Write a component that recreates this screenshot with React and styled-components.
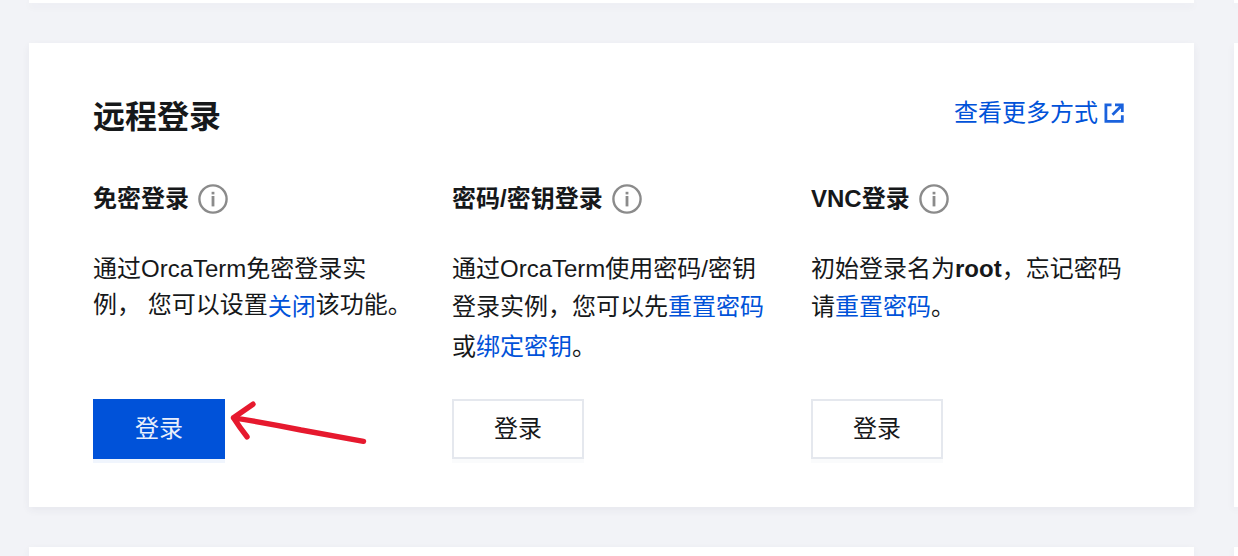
import React from 'react';
import styled, { createGlobalStyle } from 'styled-components';

const GlobalStyle = createGlobalStyle`
  * { box-sizing: border-box; }
  body {
    margin: 0;
    background: #f2f3f7;
    color: #16181a;
    font-family: "Liberation Sans", "Noto Sans CJK SC", sans-serif;
    font-size: 24px;
    line-height: 36px;
  }
`;

const Page = styled.main`
  display: grid;
  grid-template-columns: minmax(0, 1fr) 4px;
  grid-template-rows: 3px auto minmax(9px, 1fr);
  gap: 40px;
  min-height: 100vh;
  padding-left: 29px;
  overflow: hidden;
`;

const Card = styled.section`
  background: #fff;
  box-shadow: 0 3px 8px rgba(54, 58, 80, 0.06);
`;

const LoginCard = styled(Card)`
  padding: 48px 64px;
`;

const Header = styled.header`
  display: flex;
  justify-content: space-between;
  align-items: flex-start;
  margin-bottom: 40px;
`;

const Title = styled.h2`
  margin: 0;
  font-size: 32px;
  line-height: 52px;
  font-weight: 700;
`;

const Link = styled.a`
  color: #0052d9;
  line-height: ${(p) => (p.$middle ? 36 : 40)}px;
  vertical-align: ${(p) => (p.$middle ? 'middle' : 'baseline')};
  display: ${(p) => (p.$middle ? 'inline-block' : 'inline')};
  text-decoration: none;
`;

const MoreLink = styled(Link)`
  display: flex;
  align-items: center;
  line-height: 44px;
`;

const Methods = styled.div`
  display: grid;
  grid-template-columns: repeat(3, minmax(0, 1fr));
  gap: 40px;
`;

const Method = styled.article`
  display: flex;
  flex-direction: column;
  align-items: flex-start;
`;

const MethodTitle = styled.h3`
  display: flex;
  align-items: center;
  gap: 8px;
  margin: 0 0 36px;
  font-size: 24px;
  line-height: 32px;
  font-weight: 700;
`;

const Description = styled.p`
  flex: 1;
  margin: 0 0 32px;
`;

const Action = styled.div`
  position: relative;
  display: flex;
`;

const Button = styled.button`
  width: 132px;
  height: 60px;
  padding: 0;
  border: 2px solid ${(p) => (p.$primary ? '#0052d9' : '#e5e8ee')};
  background: ${(p) => (p.$primary ? '#0052d9' : '#fff')};
  color: ${(p) => (p.$primary ? '#e9effc' : '#16181a')};
  box-shadow: 0 4px 0 ${(p) => (p.$primary ? '#f0f5fd' : '#fafbfc')};
  font: inherit;
`;

const Arrow = styled.svg`
  position: absolute;
  left: 136px;
  top: 0;
  pointer-events: none;
`;

const InfoIcon = () => (
  <svg width="32" height="32" viewBox="0 0 32 32" fill="none" aria-hidden="true">
    <circle cx="16" cy="16" r="13.6" stroke="#8b8b8b" strokeWidth="2.4" />
    <rect x="14.6" y="8.8" width="2.8" height="2.6" fill="#8b8b8b" />
    <rect x="14.6" y="13" width="2.8" height="10.4" fill="#8b8b8b" />
  </svg>
);

const ExternalIcon = () => (
  <svg width="32" height="32" viewBox="0 0 32 32" fill="none" stroke="#1a62dd" strokeWidth="2.8" aria-hidden="true">
    <path d="M13.5 7.9H7.9V24.3H24.3V18.2M17 7.9H24.3V15M24 8.2L14.5 17.7" />
  </svg>
);

const RedArrow = () => (
  <Arrow width="142" height="48" viewBox="0 0 142 48" fill="none" stroke="#e6192e" strokeWidth="5.4" strokeLinecap="round" strokeLinejoin="round" aria-hidden="true">
    <path d="M134.5 42.3L72 31Q38 24 4.5 18.8M24 5.2L4.5 18.8Q11 29 18 37.8" />
  </Arrow>
);

const LoginMethod = ({ title, primary, children }) => (
  <Method>
    <MethodTitle>{title}<InfoIcon /></MethodTitle>
    <Description>{children}</Description>
    <Action>
      <Button type="button" $primary={primary}>登录</Button>
      {primary && <RedArrow />}
    </Action>
  </Method>
);

export default function App() {
  return (
    <>
      <GlobalStyle />
      <Page lang="zh-CN">
        <Card />
        <Card />
        <LoginCard>
          <Header>
            <Title>远程登录</Title>
            <MoreLink href="#more">查看更多方式<ExternalIcon /></MoreLink>
          </Header>
          <Methods>
            <LoginMethod title="免密登录" primary>
              通过OrcaTerm免密登录实例， 您可以设置<Link href="#close" $middle>关闭</Link>该功能。
            </LoginMethod>
            <LoginMethod title="密码/密钥登录">
              通过OrcaTerm使用密码/密钥登录实例，您可以先<Link href="#reset">重置密码</Link>或<Link href="#bind">绑定密钥</Link>。
            </LoginMethod>
            <LoginMethod title="VNC登录">
              初始登录名为<b>root</b>，忘记密码请<Link href="#reset-vnc">重置密码</Link>。
            </LoginMethod>
          </Methods>
        </LoginCard>
        <Card />
        <Card />
        <Card />
      </Page>
    </>
  );
}
